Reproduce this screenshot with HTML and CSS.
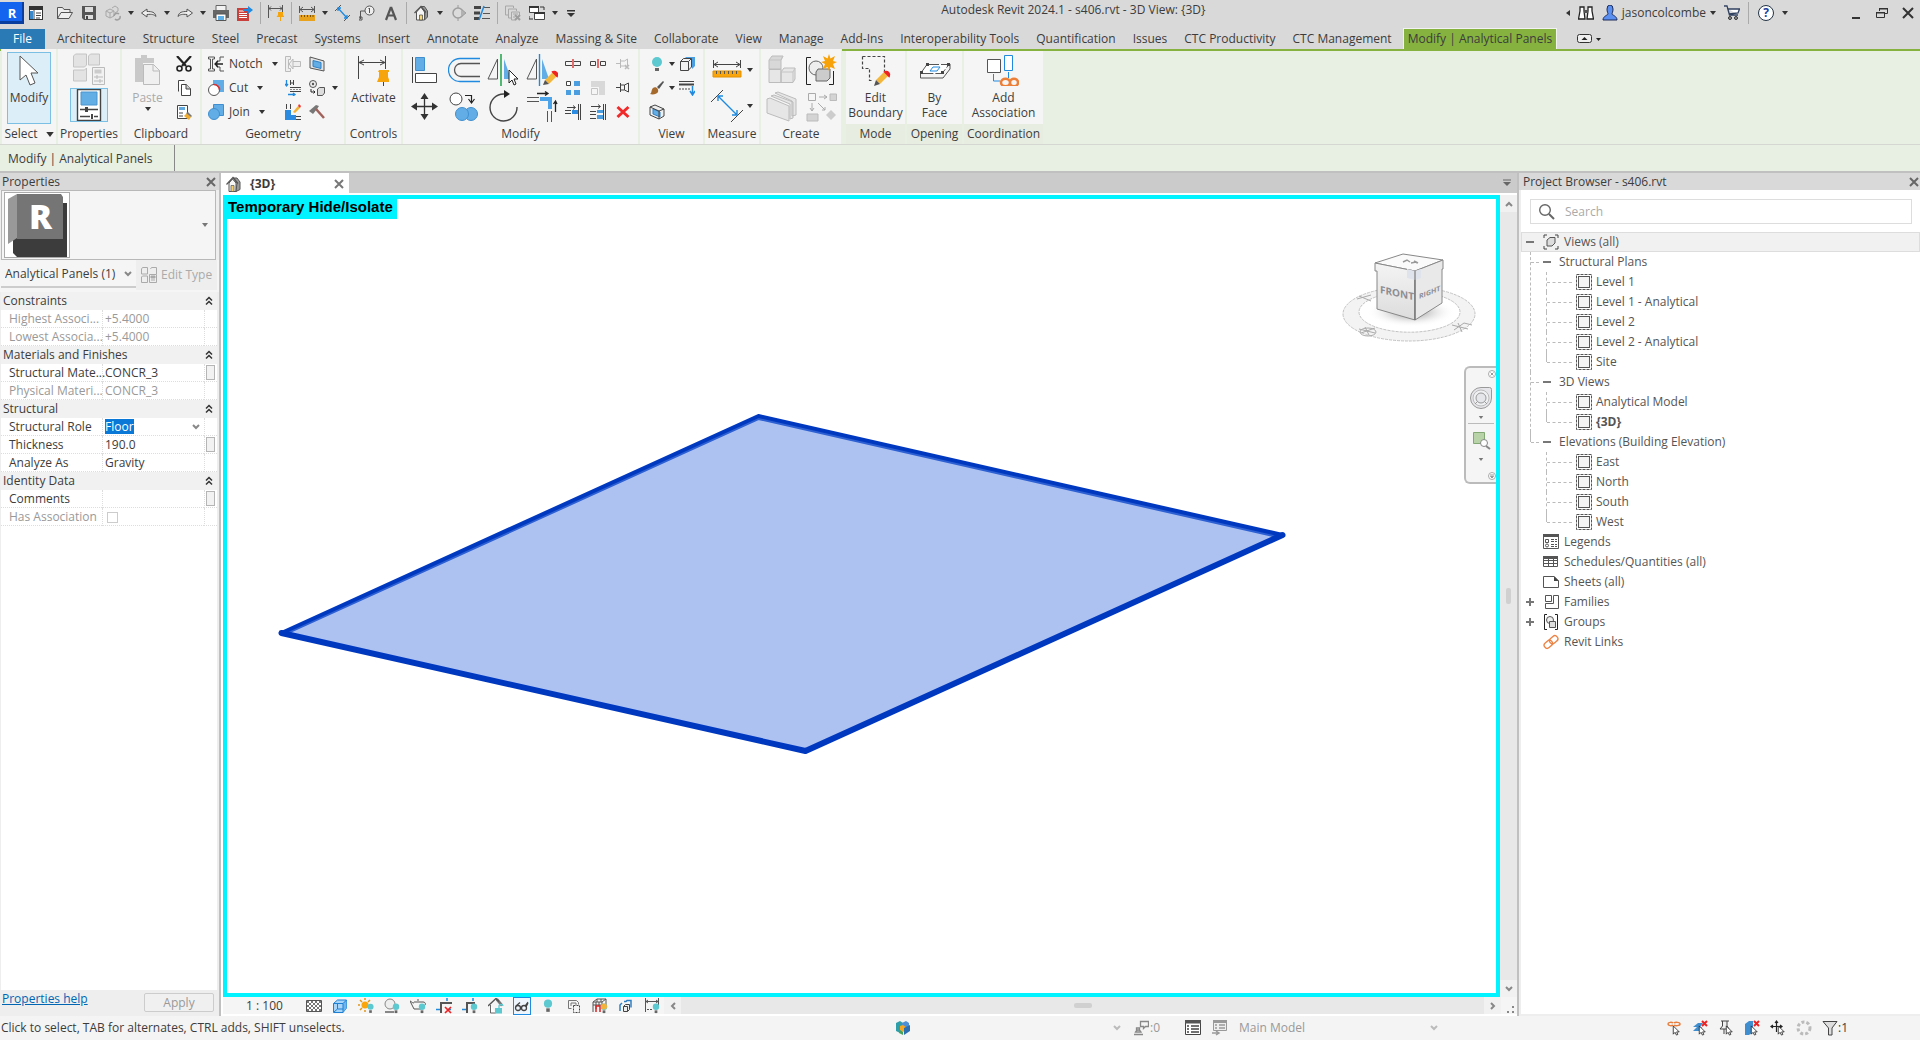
FILE: index.html
```html
<!DOCTYPE html>
<html lang="en">
<head>
<meta charset="utf-8">
<title>Autodesk Revit 2024.1 - s406.rvt - 3D View: {3D}</title>
<link rel="stylesheet" href="styles.css">
</head>
<body>
<svg class="defs" aria-hidden="true">
  <symbol id="view" viewBox="0 0 16 16"><rect x=".5" y=".5" width="15" height="15" fill="none" stroke="#555" stroke-dasharray="3 1"/><rect x="2.5" y="2.5" width="11" height="11" fill="#f3f3f3" stroke="#555"/></symbol>
  <symbol id="down" viewBox="0 0 6 4"><path d="M0 0h6L3 4z" fill="currentColor"/></symbol>
  <symbol id="chev" viewBox="0 0 8 6"><path d="M1 1l3 3 3-3" fill="none" stroke="currentColor" stroke-width="2"/></symbol>
  <symbol id="x" viewBox="0 0 10 10"><path d="M1 1l8 8M9 1L1 9" fill="none" stroke="currentColor" stroke-width="2"/></symbol>
  <symbol id="fold" viewBox="0 0 8 10"><path d="M1 4.500l3-3 3 3M1 8.500l3-3 3 3" fill="none" stroke="#333" stroke-width="1.500"/></symbol>
  <symbol id="bulb" viewBox="0 0 8 12"><circle cx="4" cy="4" r="3.500" fill="#5cc8cf"/><path d="M2.500 8h3v3h-3z" fill="#666"/></symbol>
  <symbol id="cursor" viewBox="0 0 8 12"><path d="M1 1v9l2-2 1.500 3 1.500-.7L4.700 7.500H7.500z" fill="#fff" stroke="#222" stroke-width=".9"/></symbol>
</svg>

<header class="titlebar">
  <nav class="qat" aria-label="Quick access">
    <button class="app" aria-label="Revit">R</button>
    <button class="q" aria-label="Home"><svg viewBox="0 0 16 16"><rect x="1.500" y="1.500" width="13" height="13" fill="#fff" stroke="#333"/><path d="M1 1h14v4H1z" fill="#333"/><path d="M6 5v10M8 8h5M8 10.500h5M8 13h4" stroke="#444" fill="none"/><path d="M2 6h3v8H2z" fill="#3a87c9"/></svg></button>
    <button class="q lead" aria-label="Open"><svg viewBox="0 0 16 16"><path d="M.5 13.500V2.500h5l1.500 2h6v3M.5 13.500l3.500-6h11.500l-3.500 6z" fill="#eee" stroke="#555"/></svg></button>
    <button class="q" aria-label="Save"><svg viewBox="0 0 16 16"><path d="M1 1h14v14H3l-2-2z" fill="#555"/><path d="M4 2h8v5H4zM4 10h8v4H4z" fill="#ddd"/><path d="M5 11h2v3H5z" fill="#444"/></svg></button>
    <button class="q dim" aria-label="Synchronize"><svg viewBox="0 0 16 16"><path d="M1 6l4-2 4 2v5l-4 2-4-2zM1 6l4 2 4-2M5 8v5M7 3l3-2 3 2v3l-3 2" fill="none" stroke="#888"/><path d="M9 11a3 3 0 015-2M15 11a3 3 0 01-5 3" fill="none" stroke="#777" stroke-width="1.500"/></svg></button>
    <svg class="dd"><use href="#down"/></svg>
    <button class="q" aria-label="Undo"><svg viewBox="0 0 16 16"><path d="M.5 8L6 4v2.500c5 0 8 .5 9 5-2-2-4-2.500-9-2V12z" fill="#eee" stroke="#555"/></svg></button>
    <svg class="dd"><use href="#down"/></svg>
    <button class="q" aria-label="Redo"><svg viewBox="0 0 16 16"><path d="M15.500 8L10 4v2.500c-5 0-8 .5-9 5 2-2 4-2.500 9-2V12z" fill="#eee" stroke="#555"/></svg></button>
    <svg class="dd"><use href="#down"/></svg>
    <button class="q" aria-label="Print"><svg viewBox="0 0 16 16"><path d="M3 .5h10v6H3z" fill="#f2f2f2" stroke="#666"/><path d="M0 5h16v8H0z" fill="#666"/><path d="M3 9h10v6.500H3z" fill="#fff" stroke="#555"/><path d="M5 11h6v4H5z" fill="#5fb0e8"/></svg></button>
    <button class="q" aria-label="Export PDF"><svg viewBox="0 0 16 16"><path d="M0 3h12v13H0z" fill="#c9403c"/><path d="M2 6h5M2 8.500h8M2 10.500h8M2 12.500h8" stroke="#fff"/><path d="M6 4h5V1l5 4-5 4V6H6z" fill="#1f8ae0"/></svg></button>
    <i class="sep"></i>
    <button class="q" aria-label="Controls"><svg viewBox="0 0 16 16"><path d="M.5 0v13M14.500 0v9M1 3.500h13M3 1.500l-2 2 2 2M12 1.500l2 2-2 2" fill="none" stroke="#555"/><path d="M10 7h5v3l1.500 2h-8L10 10zM12 12h1v4h-1z" fill="#f5a50b"/></svg></button>
    <i class="sep"></i>
    <button class="q" aria-label="Measure"><svg viewBox="0 0 16 16"><path d="M.5 1v7M15.500 1v7M1 4.500h14M4 2L1 4.500 4 7M12 2l3 2.500L12 7" fill="none" stroke="#555"/><path d="M0 10h16v6H0z" fill="#e9a21b"/><path d="M2.500 10v2M5.500 10v2M8.500 10v2M11.500 10v2M14 10v2" stroke="#7a5200"/></svg></button>
    <svg class="dd"><use href="#down"/></svg>
    <button class="q" aria-label="Aligned dimension"><svg viewBox="0 0 16 16"><path d="M0 6l6-6M9 16l6-6" stroke="#555"/><path d="M3 3l9 10M3 6V3h3M9 13h3v-3" fill="none" stroke="#1f8ae0" stroke-width="1.300"/></svg></button>
    <button class="q" aria-label="Tag"><svg viewBox="0 0 16 16"><circle cx="10.500" cy="5.500" r="4.500" fill="#eee" stroke="#555"/><path d="M10.500 3v5M9.500 4l1-1M6 6H1.500v8M0 12h3v3H0z" fill="none" stroke="#555"/></svg></button>
    <button class="q" aria-label="Text"><svg viewBox="0 0 16 16"><path d="M8 2L3 15M8 2l5 13M5 10.500h6" fill="none" stroke="#555" stroke-width="2.200"/></svg></button>
    <i class="sep"></i>
    <button class="q" aria-label="3D view"><svg viewBox="0 0 16 16"><path d="M2.500 7v8h8V7L7 2z" fill="#f6f6f6" stroke="#555"/><path d="M10.500 15l3-3V6l-3-4.500H7l4 5.500z" fill="#999" stroke="#555"/><path d="M.5 8l6.500-6.500 5 6" fill="none" stroke="#555" stroke-width="1.200"/><path d="M5.500 10h3v5h-3z" fill="#f8d978" stroke="#444" stroke-width=".7"/></svg></button>
    <svg class="dd"><use href="#down"/></svg>
    <button class="q dim" aria-label="Section"><svg viewBox="0 0 16 16"><circle cx="8" cy="8" r="5" fill="#ddd" stroke="#777" stroke-width="1.500"/><path d="M8 0v3M8 13v3M11 4l5 4-5 4" stroke="#777" fill="#999"/></svg></button>
    <button class="q" aria-label="Thin lines"><svg viewBox="0 0 16 16"><path d="M0 2.500h7M0 8h6M0 13.500h5" stroke="#444" stroke-width="3"/><path d="M10 2.500h6M9 8.500h7M8 13.500h8" stroke="#555"/><path d="M10 1L5 15" stroke="#1f8ae0" stroke-width="1.500"/></svg></button>
    <i class="sep"></i>
    <button class="q dim" aria-label="Close inactive views"><svg viewBox="0 0 16 16"><path d="M.5 1v9h3M.5 1h8v2M3.500 4v9h3M3.500 4h8v2M6.500 7v8h4M6.500 7h8v3M8 9h5M8 12h2" fill="none" stroke="#888"/><path d="M10 10l5 5M15 10l-5 5" stroke="#777" stroke-width="2"/></svg></button>
    <button class="q" aria-label="Switch windows"><svg viewBox="0 0 16 16"><path d="M.5 1.500h9v6h-9zM5.500 7.500h10v7h-10z" fill="#fff" stroke="#444"/><path d="M0 1h10v2H0zM5 7h11v2H5z" fill="#333"/><path d="M11 2h4v3M0 11v3h4" fill="none" stroke="#333"/></svg></button>
    <svg class="dd"><use href="#down"/></svg>
    <button class="q narrow" aria-label="Customize"><svg viewBox="0 0 16 16"><path d="M4 5h8v1.500H4zM4 8h8l-4 4z" fill="#333"/></svg></button>
  </nav>
  <h1 class="doc">Autodesk Revit 2024.1 - s406.rvt - 3D View: {3D}</h1>
  <div class="account">
    <svg class="w4" viewBox="0 0 4 6"><path d="M4 0v6L0 3z" fill="#333"/></svg>
    <button aria-label="Search"><svg viewBox="0 0 16 16"><path d="M2 2h4v4l1 8H.5L2 6zM10 2h4v4l1.500 8H9l1-8z" fill="#fff" stroke="#222" stroke-width="1.300"/><path d="M6 5h4v3H6z" fill="#555"/></svg></button>
    <button class="user"><svg viewBox="0 0 16 16"><path d="M5 4a3 4 0 016 0c0 3-1 4-1 5s5 2 5 6H1c0-4 5-5 5-6S5 7 5 4z" fill="#5b8ff0" stroke="#1c2b5a"/></svg>jasoncolcombe</button>
    <svg class="dd"><use href="#down"/></svg>
    <button aria-label="App store"><svg viewBox="0 0 16 16"><path d="M0 1h3l2.500 9H14M4 4h11.500L14 8l-9 1" fill="#fff" stroke="#30405f" stroke-width="1.300"/><circle cx="6" cy="13" r="1.500" fill="#999" stroke="#333"/><circle cx="12" cy="13" r="1.500" fill="#999" stroke="#333"/></svg></button>
    <i class="sep"></i>
    <button class="help" aria-label="Help">?</button>
    <svg class="dd"><use href="#down"/></svg>
  </div>
  <div class="win">
    <button aria-label="Minimize"><svg viewBox="0 0 12 12"><path d="M2 11h8" stroke="#333" stroke-width="2"/></svg></button>
    <button aria-label="Restore"><svg viewBox="0 0 12 12"><path d="M3.500 4V1.500h8v5H9M.5 5.500h8v5h-8z" fill="none" stroke="#333"/><path d="M3 1h9v1.500H3zM0 5h9v1.500H0z" fill="#333"/></svg></button>
    <button aria-label="Close"><svg viewBox="0 0 12 12"><path d="M1 1l10 10M11 1L1 11" stroke="#333" stroke-width="2"/></svg></button>
  </div>
</header>

<nav class="tabs" aria-label="Ribbon tabs">
  <button class="file">File</button><button>Architecture</button><button>Structure</button><button>Steel</button><button>Precast</button><button>Systems</button><button>Insert</button><button>Annotate</button><button>Analyze</button><button>Massing &amp; Site</button><button>Collaborate</button><button>View</button><button>Manage</button><button>Add-Ins</button><button>Interoperability Tools</button><button>Quantification</button><button>Issues</button><button>CTC Productivity</button><button>CTC Management</button><button class="active">Modify | Analytical Panels</button>
  <button class="toggle" aria-label="Minimize ribbon"><svg viewBox="0 0 24 10"><rect x=".5" y=".5" width="14" height="8" rx="2" fill="#eee" stroke="#333"/><path d="M4.500 6h6l-3-3z" fill="#222"/><path d="M19 4h5l-2.500 3z" fill="#222"/></svg></button>
</nav>

<section class="ribbon" aria-label="Modify ribbon">
  <div class="panel p-select">
    <div class="body"><button class="big on"><svg viewBox="0 0 32 32"><path d="M7 2v24l6-5 4 10 5-2-4-10h7z" fill="#fff" stroke="#555"/></svg><span>Modify</span></button></div>
    <h2>Select <svg class="dd"><use href="#down"/></svg></h2>
  </div>
  <div class="panel p-props">
    <div class="body col">
      <button class="mid" aria-label="Type properties"><svg viewBox="0 0 32 32"><path d="M.5 3l2-2h11v11l-2 2H.5zM15.500 3l2-2h9v11h-11zM.5 17h11l2-2v13H.5z" fill="#e3e3e3" stroke="#c4c4c4"/><path d="M19.500 14.500h12v17h-12z" fill="#f2f2f2" stroke="#bbb"/><path d="M21.500 16.500h7v4h-7z" fill="#ccc"/><path d="M21 24h9M21 28h9M24 22v4M27 26v4" stroke="#bbb"/></svg></button>
      <button class="mid on" aria-label="Properties"><svg viewBox="0 0 32 32"><path d="M4.500.5h23v31h-23z" fill="#fff" stroke="#444" stroke-width="1.400"/><path d="M8 3h16v13H8z" fill="#64aee6" stroke="#4a94cf"/><path d="M7 20.500h5M15 20.500h10M7 27.500h10M21 27.500h4" stroke="#444" stroke-width="1.300"/><path d="M12 18h3v5h-3zM18 25h2v5h-2z" fill="#444"/></svg></button>
    </div>
    <h2>Properties</h2>
  </div>
  <div class="panel p-clip">
    <div class="body">
      <button class="big off" disabled><svg viewBox="0 0 32 32"><path d="M3 4h6V1h6v3h7v5H11v19H3z" fill="#c9c9c9"/><path d="M11.500 10.500h10l6 6v14h-16z" fill="#f0f0f0" stroke="#bbb"/><path d="M21 10v7h7" fill="none" stroke="#bbb"/></svg><span>Paste</span><svg class="dd"><use href="#down"/></svg></button>
      <div class="trio">
        <button class="sm" aria-label="Cut"><svg viewBox="0 0 16 16"><path d="M1 0l9 10M15 0L6 10" stroke="#222" stroke-width="2.200"/><circle cx="3.500" cy="12.500" r="2.500" fill="none" stroke="#222" stroke-width="1.600"/><circle cx="12.500" cy="12.500" r="2.500" fill="none" stroke="#222" stroke-width="1.600"/></svg></button>
        <button class="sm" aria-label="Copy"><svg viewBox="0 0 16 16"><path d="M2.500 11.500V.5h6M5.500 4.500h5l4 4v7h-9z" fill="#fff" stroke="#444"/><path d="M10 4v5h5" fill="#ccc" stroke="#444"/></svg></button>
        <button class="sm" aria-label="Match type"><svg viewBox="0 0 16 16"><path d="M1.500 1.500h10v13h-10z" fill="#fff" stroke="#444"/><path d="M3 3h6v3H3z" fill="#5fa9e0"/><path d="M3 9h4M3 12h4" stroke="#444"/><path d="M8 12l3-3 4 4-2 3z" fill="#f0ab2e"/><path d="M10 9l2-1 4 4-1 1z" fill="#777"/></svg></button>
      </div>
    </div>
    <h2>Clipboard</h2>
  </div>
  <div class="panel p-geo">
    <div class="body">
      <div class="trio left">
        <button class="row"><svg viewBox="0 0 16 16"><path d="M.5 1h6v2h-2v10h2v2h-6v-2h2V3h-2zM16 1h-4v4H9v6h3v4h4" fill="none" stroke="#555"/><path d="M15 8H7M10 5L7 8l3 3" fill="none" stroke="#222" stroke-width="1.300"/></svg>Notch<svg class="dd"><use href="#down"/></svg></button>
        <button class="row"><svg viewBox="0 0 16 16"><path d="M5 0h11v12H9V5H5z" fill="#62ade6"/><circle cx="6" cy="10" r="5.500" fill="#fff" stroke="#555"/><path d="M6 4.500a5.500 5.500 0 015.500 5.500" fill="none" stroke="#d33" stroke-width="1.500"/></svg>Cut<svg class="dd"><use href="#down"/></svg></button>
        <button class="row"><svg viewBox="0 0 16 16"><path d="M5.500.5h10v11h-10z" fill="#62ade6" stroke="#3f8fd0"/><circle cx="6" cy="10" r="5.500" fill="#62ade6" stroke="#3f8fd0"/></svg>Join<svg class="dd"><use href="#down"/></svg></button>
      </div>
      <div class="trio">
        <button class="sm off" aria-label="Cope"><svg viewBox="0 0 16 16"><path d="M.5.5h5v3h-2v9h2v3h-5zM8 5.500h7.500v5H8M8 3v10L4 8z" fill="#eee" stroke="#bbb"/></svg></button>
        <button class="sm" aria-label="Beam joins"><svg viewBox="0 0 16 16"><path d="M1.500 0v5M0 4l1.500 2L3 4M3 14.500h6M8 13l2 1.500L8 16" stroke="#1f8ae0" fill="none" stroke-width="1.300"/><path d="M5.500 0v5M8.500 0v5M5 3h4M5 7.500h11M5 11.500h11" stroke="#444"/><path d="M5 9.500h11" stroke="#888" stroke-dasharray="2 1"/></svg></button>
        <button class="sm" aria-label="Demolish wall"><svg viewBox="0 0 16 16"><path d="M0 6h6v5h5v5H0z" fill="#2a8be0"/><path d="M1.500 0v5M5.500 0v5M11 12.500h5M11 15.500h5" stroke="#444"/><path d="M8 8l5-6 2 2-5 5z" fill="#f2b234"/><path d="M13 2l1-2 2 2-1 2z" fill="#e33"/></svg></button>
      </div>
      <div class="trio">
        <button class="sm" aria-label="Wall opening"><svg viewBox="0 0 16 16"><path d="M1 1l14 4v10L1 12z" fill="#e4e4e4" stroke="#555"/><path d="M4 4.500l8 2v6l-8-2z" fill="#62ade6" stroke="#2f7fc4"/></svg></button>
        <button class="sm" aria-label="Paint"><svg viewBox="0 0 16 16"><circle cx="4" cy="4" r="3.500" fill="#eee" stroke="#555"/><circle cx="4" cy="4" r="1.200" fill="#555"/><path d="M2 9v3h4M4.500 10.500L6 12l-1.500 1.500" stroke="#222" fill="none"/><path d="M8.500 9l2-1.500h5V13l-2 2.500h-5z" fill="#ddd" stroke="#555"/></svg></button>
        <button class="sm" aria-label="Demolish"><svg viewBox="0 0 16 16"><path d="M0 7l7-6 3 1-2 3-4 5z" fill="#777"/><path d="M7 5l8 9" stroke="#a0625a" stroke-width="2.500"/></svg></button>
      </div>
      <svg class="dd"><use href="#down"/></svg>
    </div>
    <h2>Geometry</h2>
  </div>
  <div class="panel p-ctl">
    <div class="body"><button class="big"><svg viewBox="0 0 32 32"><path d="M1.500 2v23M28.500 2v13M2 8.500h26M7 6L2 8.500 7 11M23 6l5 2.500-5 2.500" fill="none" stroke="#444"/><path d="M22 16h10v2h-1v5l2 5H20l2-5v-5h-1z" fill="#f7a50c"/><path d="M26.500 28v4" stroke="#444"/></svg><span>Activate</span></button></div>
    <h2>Controls</h2>
  </div>
  <div class="panel p-mod">
    <div class="body">
      <div class="grid4">
        <button class="lg" aria-label="Align"><svg viewBox="0 0 32 32"><path d="M3.500 3v26" stroke="#444"/><path d="M6.500 3.500h9v13h-9z" fill="#62ade6" stroke="#3f8fd0"/><path d="M6.500 19.500h21v9h-21z" fill="#fff" stroke="#444"/></svg></button>
        <button class="lg" aria-label="Offset"><svg viewBox="0 0 32 32"><path d="M32 4.500H12a11 11 0 000 23h20" fill="none" stroke="#1f8ae0" stroke-width="1.300"/><path d="M32 9.500H13a6 6 0 000 13h19" fill="none" stroke="#555" stroke-width="1.300"/></svg></button>
        <button class="lg" aria-label="Mirror pick axis"><svg viewBox="0 0 32 32"><path d="M10.500 5v20H1z" fill="none" stroke="#555"/><path d="M14 0v32" stroke="#0a9f3c" stroke-width="1.400"/><path d="M17 5v20h7z" fill="#62ade6"/><path d="M22 16v13l3-3 2 5 2-1-2-5h4z" fill="#fff" stroke="#222"/></svg></button>
        <button class="lg" aria-label="Mirror draw axis"><svg viewBox="0 0 32 32"><path d="M10.500 5v20H1z" fill="none" stroke="#555"/><path d="M13.500 0v32" stroke="#1f8ae0" stroke-width="1.400"/><path d="M16 5v20h7z" fill="#62ade6"/><path d="M19 26l8-8 4 4-8 8z" fill="#f4b73e"/><path d="M27 18a3 3 0 014 4z" fill="#e22" stroke="#e22" stroke-width="2"/><path d="M17 31l2-5 4 4z" fill="#555"/></svg></button>
        <button class="lg" aria-label="Move"><svg viewBox="0 0 32 32"><path d="M15.500 5v22M5 16.500h22" stroke="#333" stroke-width="1.300"/><path d="M15.500 3l4 6h-8zM15.500 30l4-6h-8zM2 16.500l6-4v8zM29 16.500l-6-4v8z" fill="#333"/></svg></button>
        <button class="lg" aria-label="Copy elements"><svg viewBox="0 0 32 32"><circle cx="8" cy="9" r="6" fill="#fff" stroke="#444"/><path d="M17 5.500h6.500V12M20.500 9l3 4 3-4" fill="none" stroke="#222" stroke-width="1.200"/><circle cx="23" cy="24" r="6.500" fill="#62ade6" stroke="#3f8fd0"/><circle cx="14" cy="24" r="6.500" fill="#62ade6" stroke="#3f8fd0"/></svg></button>
        <button class="lg" aria-label="Rotate"><svg viewBox="0 0 32 32"><path d="M17 4a13.500 13.500 0 1013 13" fill="none" stroke="#444" stroke-width="1.400"/><path d="M17 0v8l6-4z" fill="#222"/></svg></button>
        <button class="lg" aria-label="Trim corner"><svg viewBox="0 0 32 32"><path d="M1 7.500h12M1 11.500h12M21.500 21v11M25.500 21v11" stroke="#555"/><path d="M14 7h12v12h-4v-8h-8z" fill="#4ba3ea"/><path d="M11 3.500h11M19 1.500l3 2-3 2M29.500 22V11M27.500 14l2-3 1.500 3" fill="none" stroke="#222" stroke-width="1.300"/></svg></button>
      </div>
      <div class="grid3">
        <button class="sm" aria-label="Split"><svg viewBox="0 0 16 16"><path d="M7 5.500H.5v4H7M9 5.500h6.500v4H9" fill="none" stroke="#444"/><path d="M8 3v9" stroke="#d22" stroke-width="1.300"/></svg></button>
        <button class="sm" aria-label="Split with gap"><svg viewBox="0 0 16 16"><path d="M.5 5.500h5v4h-5zM10.500 5.500h5v4h-5z" fill="none" stroke="#444"/><path d="M8 3v9" stroke="#d22" stroke-width="1.300"/></svg></button>
        <button class="sm off" aria-label="Unpin"><svg viewBox="0 0 16 16"><path d="M1 7.500h4M5.500 3v9M5.500 5h4l3-2v9l-3-2h-4" fill="none" stroke="#bbb"/><path d="M10 9l4 4M14 9l-4 4" stroke="#bbb" stroke-width="1.500"/></svg></button>
        <button class="sm" aria-label="Array"><svg viewBox="0 0 16 16"><path d="M1.500 1.500h4v4h-4z" fill="#fff" stroke="#444"/><path d="M9 1h6v5H9zM1 10h5v5H1zM9 10h6v5H9z" fill="#4b9fe0"/></svg></button>
        <button class="sm off" aria-label="Scale"><svg viewBox="0 0 16 16"><path d="M1 1h14v14H9V7H1z" fill="#d8d8d8"/><path d="M1.500 8.500h6v6h-6z" fill="#f5f5f5" stroke="#c4c4c4"/></svg></button>
        <button class="sm" aria-label="Pin"><svg viewBox="0 0 16 16"><path d="M1 7.500h4M5.500 3v9M5.500 5h4l4-2v9l-4-2h-4M9.500 5v5" fill="none" stroke="#444"/></svg></button>
        <button class="sm" aria-label="Trim single"><svg viewBox="0 0 16 16"><path d="M2 3.500h8M8 1.500l2.500 2L8 5.500M13.500 0v16M15.500 0v16M0 6.500h6M0 9.500h6" fill="none" stroke="#444"/><path d="M7 6h6v4H7z" fill="#2a8be0"/></svg></button>
        <button class="sm" aria-label="Trim multiple"><svg viewBox="0 0 16 16"><path d="M1 2.500h9M8 .5l2.500 2L8 4.500M13.500 0v16M15.500 0v16M0 7.500h6M0 10.500h6M0 14.500h6" fill="none" stroke="#444"/><path d="M7 6h6v3H7zM7 11h6v4H7z" fill="#4b9fe0"/></svg></button>
        <button class="sm" aria-label="Delete"><svg viewBox="0 0 16 16"><path d="M2.500 3l11 10M13.500 3l-11 10" stroke="#f02a2a" stroke-width="3"/></svg></button>
      </div>
    </div>
    <h2>Modify</h2>
  </div>
  <div class="panel p-view">
    <div class="body">
      <div class="trio">
        <button class="sm" aria-label="Hide"><svg viewBox="0 0 16 16"><circle cx="8" cy="6" r="5" fill="#5cc8cf"/><path d="M6 12h4v3H6z" fill="#666"/></svg></button>
        <button class="sm" aria-label="Override"><svg viewBox="0 0 16 16"><path d="M8 7l6-6 1 1-5 7z" fill="#555"/><path d="M1 14c2-1 1-4 3-6 3-2 6 1 5 4-1 2-5 3-8 2z" fill="#a4692b"/></svg></button>
        <button class="sm" aria-label="Selection box"><svg viewBox="0 0 16 16"><path d="M1 3l5-2 9 4v7l-5 3-9-4z" fill="#eee" stroke="#444"/><path d="M4 5l7 3v5l-7-3z" fill="#62ade6" stroke="#2f7fc4"/><path d="M1 3l9 4v8M10 7l5-2" fill="none" stroke="#444"/></svg></button>
      </div>
      <div class="trio dds"><svg class="dd"><use href="#down"/></svg><svg class="dd"><use href="#down"/></svg><span></span></div>
      <div class="trio">
        <button class="sm" aria-label="Displace"><svg viewBox="0 0 16 16"><path d="M4 4l3-3h9v9l-3 3V4z" fill="#4b9fe0"/><path d="M1.500 5.500h8v9h-8zM1.500 5.500l3-3h8l-3 3M12.500 3v8l-3 3" fill="#f2f2f2" stroke="#444"/></svg></button>
        <button class="sm" aria-label="Linework"><svg viewBox="0 0 16 16"><path d="M0 1.500h15" stroke="#444"/><path d="M0 4.500h15" stroke="#444" stroke-width="2"/><path d="M0 9h11" stroke="#444" stroke-dasharray="2 1"/><path d="M13.500 6v8M11 11l2.500 4 2.500-4" stroke="#1f8ae0" stroke-width="1.500" fill="none"/></svg></button>
        <span></span>
      </div>
    </div>
    <h2>View</h2>
  </div>
  <div class="panel p-meas">
    <div class="body">
      <div class="grid2">
        <button class="lg" aria-label="Measure"><svg viewBox="0 0 32 32"><path d="M2.500 6v8M29.500 6v8M3 10.500h26M7 8l-4 2.500L7 13M25 8l4 2.500-4 2.500" fill="none" stroke="#444"/><path d="M2 17h28v6H2z" fill="#fba50c" stroke="#e09000"/><path d="M5.500 17v3M9.500 17v3M13.500 17v3M17.500 17v3M21.500 17v3M25.500 17v3" stroke="#555"/></svg></button><svg class="dd"><use href="#down"/></svg>
        <button class="lg" aria-label="Dimension"><svg viewBox="0 0 32 32"><path d="M0 12L12 0M20 32l12-12" stroke="#444"/><path d="M7 6l19 19M7 11V6h5M21 25h5v-5" fill="none" stroke="#1f8ae0" stroke-width="1.400"/></svg></button><svg class="dd"><use href="#down"/></svg>
      </div>
    </div>
    <h2>Measure</h2>
  </div>
  <div class="panel p-create">
    <div class="body">
      <div class="grid22">
        <button class="lg off" aria-label="Create assembly"><svg viewBox="0 0 32 32"><path d="M3 6l3-4h11l-2 4v9H3z" fill="#d8d8d8" stroke="#bcbcbc"/><path d="M3 15.500h12v13H3zM15 18l3-4h11v11l-2 3.500H15z" fill="#e6e6e6" stroke="#bcbcbc"/><path d="M3 6h12l2-4M15 15v13M15 18h12l2-4M27 18v10" fill="none" stroke="#c4c4c4"/></svg></button>
        <button class="lg" aria-label="Create group"><svg viewBox="0 0 32 32"><path d="M6 3.500H1.500v27H6M24 30.500h4.500V17" fill="none" stroke="#222"/><circle cx="11" cy="14" r="7" fill="#eee" stroke="#666"/><path d="M11 18l2-3h12v9l-3 3H11z" fill="#ccc" stroke="#666"/><path d="M24 0l1.500 4.500L30 2l-2 5 4 1-4 2 2 5-4.500-2L24 17l-1.500-4L18 15l2-5-4-2 4-1-2-5 4.500 2.500z" fill="#f7a208"/></svg></button>
        <button class="lg off" aria-label="Create parts"><svg viewBox="0 0 32 32"><path d="M9 3l3-1 18 7v16l-4 1V11zM5 6l3-1 19 7v16l-3 1V14zM1 9l3-1 19 8v15L1 23z" fill="#e6e6e6" stroke="#bcbcbc"/></svg></button>
        <button class="lg off" aria-label="Create similar"><svg viewBox="0 0 32 32"><path d="M3.500 3.500h7v7h-7z" fill="#f5f5f5" stroke="#aaa"/><path d="M25 4h6.500v6.500H25zM2 24h11v7H2z" fill="#d4d4d4" stroke="#bbb"/><path d="M26 20l5 5-5 5-5-5z" fill="#ccc"/><path d="M14 7h8M19 5l3 2-3 2M7 13v8M5 18l2 3 2-3M13 13l7 7M17 20h3v-3" fill="none" stroke="#aaa"/></svg></button>
      </div>
    </div>
    <h2>Create</h2>
  </div>
  <div class="panel ctx p-mode">
    <div class="body"><button class="big"><svg viewBox="0 0 32 32"><path d="M2.500 2.500h22v15M2.500 2.500v12h7v12h4" fill="none" stroke="#444" stroke-dasharray="3 2" stroke-width="1.200"/><path d="M16 26l8-8 4 4-8 8z" fill="#f4b73e"/><path d="M25 18a3 3 0 014 4z" fill="#e22" stroke="#e22" stroke-width="2"/><path d="M14 32l2-6 4 4z" fill="#555"/></svg><span>Edit<br>Boundary</span></button></div>
    <h2>Mode</h2>
  </div>
  <div class="panel ctx p-open">
    <div class="body"><button class="big"><svg viewBox="0 0 32 32"><path d="M8 10.500h22l-7 9H1.500z" fill="#fff" stroke="#555" stroke-dasharray="12 2"/><path d="M1.500 19v5H24l7-9v-5" fill="none" stroke="#555"/><path d="M14 13h7l-3 4h-7z" fill="#fff" stroke="#1f8ae0"/><path d="M7 9h3v3H7zM28 9h3v3h-3zM1 17h3v3H1zM22 17h3v3h-3z" fill="#444"/></svg><span>By<br>Face</span></button></div>
    <h2>Opening</h2>
  </div>
  <div class="panel ctx p-coord">
    <div class="body"><button class="big"><svg viewBox="0 0 32 32"><path d="M.5 5.500h13v13H.5z" fill="#fff" stroke="#555"/><path d="M17.500 1.500h8v15h-8z" fill="#fff" stroke="#1f8ae0"/><path d="M6.500 20v7H13M21.500 18v6" fill="none" stroke="#1f8ae0"/><path d="M14 28.500c0-5 9-5 9 0s8 5 8 0-8-5-8 0-9 5-9 0z" fill="none" stroke="#ec7f38" stroke-width="2.500"/></svg><span>Add<br>Association</span></button></div>
    <h2>Coordination</h2>
  </div>
</section>

<div class="options"><span>Modify | Analytical Panels</span></div>

<main class="work">
  <aside class="props">
    <header class="dockhead"><span>Properties</span><button aria-label="Close Properties"><svg viewBox="0 0 10 10"><use href="#x"/></svg></button></header>
    <button class="typesel" aria-label="Type selector">
      <svg class="thumb" viewBox="0 0 64 64"><path d="M8 10h54v54H12l-4-4z" fill="#3c3c3c"/><path d="M12 1L3 6v45l9-6z" fill="#999"/><path d="M12 1h44l2 3v42H12z" fill="#757575"/><text x="24" y="36" class="logo">R</text></svg>
      <svg class="dd"><use href="#down"/></svg>
    </button>
    <div class="filter">
      <label class="pick"><select aria-label="Category filter"><option>Analytical Panels (1)</option></select><svg class="cv"><use href="#chev"/></svg></label>
      <button class="edit" disabled><svg viewBox="0 0 16 16"><path d="M.5 2l1-1.500h5V7h-6zM9.500 2l1-1.500h5V7M.5 10l1-1h5v6.500h-6z" fill="none" stroke="#aaa"/><path d="M8.500 7.500h7v8h-7z" fill="#eee" stroke="#aaa"/><path d="M10 9h4v2h-4zM10 13h4" fill="#aaa" stroke="#aaa"/></svg>Edit Type</button>
    </div>
    <div class="scroll">
      <table class="ptable">
        <colgroup><col class="c1"><col><col class="c3"></colgroup>
        <tr class="g"><th colspan="2">Constraints</th><td><svg><use href="#fold"/></svg></td></tr>
        <tr class="off"><th>Highest Associ...</th><td>+5.4000</td><td></td></tr>
        <tr class="off"><th>Lowest Associa...</th><td>+5.4000</td><td></td></tr>
        <tr class="g"><th colspan="2">Materials and Finishes</th><td><svg><use href="#fold"/></svg></td></tr>
        <tr><th>Structural Mate...</th><td>CONCR_3</td><td><button aria-label="Associate material"></button></td></tr>
        <tr class="off"><th>Physical Materi...</th><td>CONCR_3</td><td></td></tr>
        <tr class="g"><th colspan="2">Structural</th><td><svg><use href="#fold"/></svg></td></tr>
        <tr><th>Structural Role</th><td><label class="pick role"><select aria-label="Structural Role"><option>Floor</option></select><svg class="cv"><use href="#chev"/></svg></label></td><td></td></tr>
        <tr><th>Thickness</th><td>190.0</td><td><button aria-label="Associate thickness"></button></td></tr>
        <tr><th>Analyze As</th><td>Gravity</td><td></td></tr>
        <tr class="g"><th colspan="2">Identity Data</th><td><svg><use href="#fold"/></svg></td></tr>
        <tr><th>Comments</th><td></td><td><button aria-label="Associate comments"></button></td></tr>
        <tr class="off"><th>Has Association</th><td><input type="checkbox" aria-label="Has Association" disabled></td><td></td></tr>
      </table>
    </div>
    <footer><a href="#help">Properties help</a><button disabled>Apply</button></footer>
  </aside>

  <section class="viewer">
    <div class="vtabs">
      <div class="vtab"><svg viewBox="0 0 16 16"><path d="M3 7v8.500h7V7L6.500 3z" fill="#f6f6f6" stroke="#555"/><path d="M10 15.500l4-2V6l-3-4H7l4 5z" fill="#999" stroke="#555"/><path d="M.5 8.500L7 1.500l5 6" fill="none" stroke="#555" stroke-width="1.200"/><path d="M5 9.500h3v6H5z" fill="#f4cf6a" stroke="#555" stroke-width=".7"/></svg><strong>{3D}</strong><button aria-label="Close view"><svg viewBox="0 0 10 10"><use href="#x"/></svg></button></div>
      <button class="vmenu" aria-label="View list"><svg viewBox="0 0 8 8"><path d="M0 .5h8v1H0zM0 3h8L4 7z" fill="#666"/></svg></button>
    </div>
    <div class="vrow">
      <div class="canvas">
        <svg class="scene" viewBox="0 0 1268 794" preserveAspectRatio="xMidYMid meet" role="img" aria-label="Analytical panel">
          <path d="M54 434L531 217 1055 336 578 552z" fill="#aec2f2"/>
          <path d="M58 434L531 219 1050 337" fill="none" stroke="#2d60d2" stroke-width="4"/>
          <path d="M54 434L531 217 1055 336" fill="none" stroke="#0039bf" stroke-width="4" stroke-linejoin="round"/>
          <path d="M54 434L578 552 1055 336" fill="none" stroke="#0039bf" stroke-width="6" stroke-linejoin="round" stroke-linecap="round"/>
        </svg>
        <span class="isolate">Temporary Hide/Isolate</span>
        <svg class="cube" viewBox="0 0 136 92">
          <defs><radialGradient id="sh"><stop offset="0" stop-color="#555" stop-opacity=".75"/><stop offset="1" stop-color="#fff" stop-opacity="0"/></radialGradient><linearGradient id="fr" x2="0" y2="1"><stop offset="0" stop-color="#f4f4f5"/><stop offset="1" stop-color="#dcdcdc"/></linearGradient></defs>
          <path fill-rule="evenodd" d="M2 61a66 27 0 10132 0a66 27 0 10-132 0zM18 59a50 20 0 10101 0a50 20 0 10-101 0z" fill="#f3f3f3" stroke="#c2c2c2" stroke-dasharray="3 1"/>
          <ellipse cx="70" cy="59" rx="44" ry="15" fill="url(#sh)"/>
          <path d="M34 10L62 1l40 6-28 11z" fill="#fafafa" stroke="#888"/>
          <path d="M34 10l40 8v49l-38-11V18h-2z" fill="url(#fr)" stroke="#888"/>
          <path d="M74 18l28-11v9h-1v34L74 67z" fill="#e9e9ea" stroke="#888"/>
          <path d="M66 16l8 2 6-2v9l-6 2-8-2z" fill="#dfe3ec"/><path d="M74 18v49" stroke="#666"/>
          <path d="M62 9l4-2 3 2M70 10l5-1 1 1M73 8l4 2" fill="none" stroke="#999" stroke-width="1.500"/>
          <text transform="translate(39 40) skewY(12)" class="face front">FRONT</text>
          <text transform="translate(78 46) skewY(-22)" class="face side">RIGHT</text>
          <path d="M16 46l14-4M18 43l12 5M20 80l14-5M18 76l16 4M24 74l4 8M111 72l16 4M113 77l10-7 8 2M117 70l4 9" stroke="#aaa" fill="none"/>
          <ellipse cx="27" cy="79" rx="8" ry="4" fill="none" stroke="#aaa"/>
        </svg>
        <div class="navbar">
          <button class="nx" aria-label="Close navigation bar"><svg viewBox="0 0 8 8"><circle cx="4" cy="4" r="3.500" fill="#fff" stroke="#aaa"/><path d="M2.500 2.500l3 3M5.500 2.500l-3 3" stroke="#999"/></svg></button>
          <button aria-label="Steering wheel"><svg class="nb" viewBox="0 0 24 24"><path d="M12 1.500h8.500a2 2 0 012 2V12A10.500 10.500 0 1112 1.500z" fill="#e6e6ea" stroke="#999"/><circle cx="12" cy="12" r="8" fill="#eef0f2" stroke="#bbb"/><path d="M6 18l3-3M18 18l-3-3" stroke="#999"/><circle cx="12" cy="12" r="5" fill="#e4e6ea" stroke="#999"/></svg></button>
          <svg class="dd"><use href="#down"/></svg>
          <hr>
          <button aria-label="Zoom region"><svg class="nb" viewBox="0 0 24 24"><path d="M4.500 4.500h11v11h-11z" fill="#b9d3a8" stroke="#83a873"/><circle cx="15" cy="15" r="3.500" fill="#fff" stroke="#888"/><path d="M17 18l4 3" stroke="#888" stroke-width="2"/></svg></button>
          <svg class="dd"><use href="#down"/></svg>
          <button class="nx end" aria-label="Customize"><svg viewBox="0 0 8 8"><circle cx="4" cy="4" r="3.500" fill="#fff" stroke="#aaa"/><path d="M2 3h4M2.500 4.500h3L4 6z" stroke="#999" fill="#999"/></svg></button>
        </div>
      </div>
      <div class="vs"><button aria-label="Scroll up"><svg class="cv flip"><use href="#chev"/></svg></button><i></i><button aria-label="Scroll down"><svg class="cv"><use href="#chev"/></svg></button></div>
    </div>
    <div class="vbar">
      <button class="scale">1 : 100</button>
      <div class="vicons">
        <button aria-label="Detail level"><svg viewBox="0 0 16 16"><path d="M.5 2.500h15v11H.5z" fill="#fff" stroke="#555"/><path d="M1 4h14M1 8h14M1 12h14" stroke="#777" stroke-width="2" stroke-dasharray="2 2"/><path d="M3 6h12M3 10h12" stroke="#777" stroke-width="2" stroke-dasharray="2 2"/></svg></button>
        <button aria-label="Visual style"><svg viewBox="0 0 16 16"><path d="M1.500 5.500l4-3.500h9v8l-3.500 4.500h-9.500z" fill="#a7d5fa" stroke="#1f7fd0"/><path d="M11 5.500L14.500 2v8L11 14.500z" fill="#6cb6f0"/><path d="M1.500 5.500H11v9M11 5.500L14.500 2M5.500 6v5M2 14l3.500-3H11" fill="none" stroke="#1f7fd0"/></svg></button>
        <button aria-label="Sun path"><svg viewBox="0 0 16 16"><circle cx="7" cy="7" r="3.500" fill="#f9a50b"/><path d="M7 0v2M7 12v2M0 7h2M12 7h2M2 2l2 2M12 2l-2 2M2 12l2-2" stroke="#e0941a" stroke-width="1.500"/><use href="#bulb" x="9" y="5" width="7" height="11"/></svg></button>
        <button aria-label="Shadows"><svg viewBox="0 0 16 16"><circle cx="6" cy="6" r="5" fill="#eee" stroke="#888"/><path d="M1 14h9" stroke="#888" stroke-width="2"/><use href="#bulb" x="8" y="5" width="8" height="11"/></svg></button>
        <button aria-label="Rendering"><svg viewBox="0 0 16 16"><path d="M4 5c-2 0-3-2-4-2l4 8h7M4 4h9c3 0 3 3 1 4M8 1v2" fill="none" stroke="#555"/><use href="#bulb" x="8" y="5" width="8" height="11"/></svg></button>
        <button aria-label="Crop view"><svg viewBox="0 0 16 16"><path d="M5 15V5h11" fill="none" stroke="#555" stroke-width="2"/><path d="M11 0v3M0 11.500h4M12 11.500h3" stroke="#1f8ae0" stroke-width="1.500"/><path d="M9 9l6 6M15 9l-6 6" stroke="#e22" stroke-width="1.700"/></svg></button>
        <button aria-label="Show crop"><svg viewBox="0 0 16 16"><path d="M5 15V5h8" fill="none" stroke="#555" stroke-width="2"/><path d="M11 0v3M0 11.500h4" stroke="#1f8ae0" stroke-width="1.500"/><use href="#bulb" x="8" y="5" width="8" height="11"/></svg></button>
        <button aria-label="Lock 3D view"><svg viewBox="0 0 16 16"><path d="M2.500 7v8h5" fill="#fff" stroke="#666"/><path d="M8 .5h2l5 6-2 2-5-6z" fill="#777"/><path d="M0 8l8-7.500 3 3" fill="none" stroke="#555" stroke-width="1.400"/><path d="M7 10h7v5.500H7z" fill="#5cc8cf"/><path d="M11 10V8c0-2 4-2 4 0" fill="none" stroke="#5cc8cf" stroke-width="1.300"/></svg></button>
        <button class="sel" aria-label="Temporary hide/isolate"><svg viewBox="0 0 16 16"><circle cx="4" cy="10" r="2.500" fill="none" stroke="#444" stroke-width="1.300"/><circle cx="10" cy="10" r="2.500" fill="none" stroke="#444" stroke-width="1.300"/><path d="M2 8l4-3.500M11 8l3-4M6.500 10h1M12 9l2-4" fill="none" stroke="#444" stroke-width="1.200"/></svg></button>
        <button aria-label="Reveal hidden"><svg viewBox="0 0 16 16"><use href="#bulb" x="3" y="1" width="10" height="14"/></svg></button>
        <button aria-label="View properties"><svg viewBox="0 0 16 16"><path d="M2.500 10.500v-8h8l2 2v2M2.500 10.500h3M5 5h5v2M5 5v3" fill="none" stroke="#777"/><path d="M7.500 7.500h6v7h-6z" fill="#f5f5f5" stroke="#444" stroke-dasharray="2 1"/></svg></button>
        <button aria-label="Analytical model"><svg viewBox="0 0 16 16"><path d="M1 4l4-3h9v8M1 4h9v4M1 4v10M1 7h9M4 4v7M7 4v4M10 4l4-3M5 1v3M9 1v3" fill="none" stroke="#555"/><path d="M4 14V8h4v6" fill="none" stroke="#d22" stroke-width="1.500"/><use href="#bulb" x="8" y="5" width="8" height="11"/><circle cx="12" cy="8.500" r="3" fill="#f3b23a"/></svg></button>
        <button aria-label="Displacement sets"><svg viewBox="0 0 16 16"><path d="M6 3.500h2l1-1h4v7M4 5l-2 2v6" fill="none" stroke="#2f7fc4" stroke-width="1.500"/><path d="M5.500 8.500h4v5h-4zM5.500 8.500l2-2h4v5l-2 2" fill="#eee" stroke="#444"/></svg></button>
        <button aria-label="Constraints"><svg viewBox="0 0 16 16"><path d="M1.500 0v14M14.500 0v7M2 3.500h12M4 2L2 3.500 4 5M12 2l2 1.500L12 5" fill="none" stroke="#555"/><path d="M3 11.500h6" stroke="#555" stroke-dasharray="2 1"/><use href="#bulb" x="8" y="5" width="8" height="11"/></svg></button>
      </div>
      <div class="hs"><button aria-label="Scroll left"><svg class="cv ltr"><use href="#chev"/></svg></button><i></i><button aria-label="Scroll right"><svg class="cv rtl"><use href="#chev"/></svg></button></div>
      <svg class="grip" viewBox="0 0 8 8"><path d="M6 0h2v2H6zM6 5h2v2H6zM1 5h2v2H1z" fill="#888"/></svg>
    </div>
  </section>

  <aside class="browser">
    <header class="dockhead"><span>Project Browser - s406.rvt</span><button aria-label="Close Project Browser"><svg viewBox="0 0 10 10"><use href="#x"/></svg></button></header>
    <label class="search"><svg viewBox="0 0 16 16"><circle cx="6" cy="6" r="5.300" fill="none" stroke="#666" stroke-width="1.400"/><path d="M10 10l5 5" stroke="#666" stroke-width="2"/></svg><input type="search" placeholder="Search" aria-label="Search"></label>
    <ul class="tree">
      <li class="root"><i class="tg"></i><svg viewBox="0 0 16 16"><path d="M4 1H1v3M12 1h3v3M4 15H1v-3M12 15h3v-3" fill="none" stroke="#444"/><path d="M4 6l3-2.500h5V9l-3 3H4z" fill="#ddd" stroke="#555"/></svg><span>Views (all)</span></li>
      <li class="views">
        <ul class="l2">
          <li><div class="n"><i class="tg"></i><span>Structural Plans</span></div>
            <ul class="l3"><li><svg><use href="#view"/></svg><span>Level 1</span></li><li><svg><use href="#view"/></svg><span>Level 1 - Analytical</span></li><li><svg><use href="#view"/></svg><span>Level 2</span></li><li><svg><use href="#view"/></svg><span>Level 2 - Analytical</span></li><li><svg><use href="#view"/></svg><span>Site</span></li></ul></li>
          <li><div class="n"><i class="tg"></i><span>3D Views</span></div>
            <ul class="l3"><li><svg><use href="#view"/></svg><span>Analytical Model</span></li><li><svg><use href="#view"/></svg><strong>{3D}</strong></li></ul></li>
          <li><div class="n"><i class="tg"></i><span>Elevations (Building Elevation)</span></div>
            <ul class="l3"><li><svg><use href="#view"/></svg><span>East</span></li><li><svg><use href="#view"/></svg><span>North</span></li><li><svg><use href="#view"/></svg><span>South</span></li><li><svg><use href="#view"/></svg><span>West</span></li></ul></li>
        </ul>
      </li>
      <li class="top"><i class="tg none"></i><svg viewBox="0 0 16 16"><path d="M.5 1.500h15v13H.5z" fill="#fff" stroke="#555"/><path d="M0 0h16v3H0z" fill="#555"/><path d="M2.500 5.500h3v3h-3z" fill="none" stroke="#555"/><circle cx="4" cy="11.500" r="1.500" fill="none" stroke="#555"/><path d="M8 5.500h6M8 7.500h6M8 10.500h6M8 12.500h6" stroke="#555" stroke-dasharray="3 1"/></svg><span>Legends</span></li>
      <li class="top"><i class="tg none"></i><svg viewBox="0 0 16 16"><path d="M.5 2.500h14v10H.5zM5.500 4v9M10.500 4v9M0 6.500h15M0 9.500h15" fill="none" stroke="#555"/><path d="M0 2h15v3H0z" fill="#555"/></svg><span>Schedules/Quantities (all)</span></li>
      <li class="top"><i class="tg none"></i><svg viewBox="0 0 16 16"><path d="M.5 2.500H11L15.500 7v6.500H.5z" fill="#fff" stroke="#555"/><path d="M11 2v5h5z" fill="#444"/></svg><span>Sheets (all)</span></li>
      <li class="top"><i class="tg plus"></i><svg viewBox="0 0 16 16"><path d="M2.500 1.500h6v6h-6zM10.500 1.500h5v13h-13v-5h8z" fill="#fff" stroke="#555"/></svg><span>Families</span></li>
      <li class="top"><i class="tg plus"></i><svg viewBox="0 0 16 16"><path d="M4 .5H1.500v15H4M12 .5h2.500v15H12" fill="none" stroke="#222"/><circle cx="7" cy="6" r="3.500" fill="#eee" stroke="#555"/><path d="M6.500 7.500h6v6h-6z" fill="#ddd" stroke="#555"/></svg><span>Groups</span></li>
      <li class="top"><i class="tg none"></i><svg viewBox="0 0 16 16"><g transform="rotate(-40 8 8)" fill="none" stroke="#ec8344" stroke-width="1.400"><rect x="0" y="5" width="9" height="6" rx="3"/><rect x="7" y="5" width="9" height="6" rx="3"/></g></svg><span>Revit Links</span></li>
    </ul>
  </aside>
</main>

<footer class="status">
  <span class="msg">Click to select, TAB for alternates, CTRL adds, SHIFT unselects.</span>
  <button class="s16" aria-label="Worksharing"><svg viewBox="0 0 16 16"><path d="M1 3l4-2 3 2v8l-3 2-4-2z" fill="#2f9ea8"/><path d="M7 3l4-2 3 2v4l-3 2-4-2z" fill="#4d8fd6"/><path d="M5 6l3-1 3 2v3l-3 2-3-2z" fill="#f5a623"/><path d="M9 8l6-3v6l-6 4z" fill="#2c6fb0"/><path d="M4 10l4 2v3l-4-2z" fill="#45a35a"/></svg></button>
  <div class="mid-s">
    <svg class="cv"><use href="#chev"/></svg>
    <span class="req"><svg viewBox="0 0 16 16"><path d="M7.500 1.500h8v5h-3l-2 2v-2h-3zM1 14.500h9M2.500 12a3 3 0 015.500 0zM3.500 8h3v2h-3z" fill="none" stroke="#888" stroke-width="1.300"/></svg>:0</span>
    <button class="s16" aria-label="Design options"><svg viewBox="0 0 16 16"><path d="M.5 1.500h15v13H.5z" fill="#fff" stroke="#444"/><path d="M0 0h16v3.500H0z" fill="#555"/><path d="M2 6h2M6 6h8M2 9h2M6 9h8M2 12h2M6 12h8" stroke="#444" stroke-width="1.500"/></svg></button>
    <button class="s16 opt" aria-label="Pick option"><svg viewBox="0 0 16 16"><path d="M2.500.5h13v10h-13z" fill="#eee" stroke="#999"/><path d="M2 0h14v3H2z" fill="#999"/><path d="M4 5h2M8 5h6M4 8h2M8 8h6M1 13h6M5 11l3 2-3 2" stroke="#999" fill="none" stroke-width="1.500"/></svg></button>
    <label class="pick model"><select aria-label="Active design option" disabled><option>Main Model</option></select><svg class="cv"><use href="#chev"/></svg></label>
  </div>
  <div class="right-s">
    <button class="s16" aria-label="Select links"><svg viewBox="0 0 16 16"><path d="M7 5c-1 1-5 1-5-1s4-2 5-1M8 5c1 1 6 1 6-1s-5-2-6-1" fill="none" stroke="#e87d3c" stroke-width="1.500"/><use href="#cursor" x="6" y="5" width="8" height="11"/></svg></button>
    <button class="s16" aria-label="Select underlay"><svg viewBox="0 0 16 16"><path d="M1 7l5-4h5L8 7zM1 11l4-4h5l-3 4z" fill="#3f8fd0"/><path d="M10 1l5 5M15 1l-5 5" stroke="#e22" stroke-width="2"/><use href="#cursor" x="6" y="5" width="8" height="11"/></svg></button>
    <button class="s16" aria-label="Select pinned"><svg viewBox="0 0 16 16"><path d="M3 1h8M4.500 1v5L2 9h9L9 6V1M6 9v5" fill="#eee" stroke="#444"/><use href="#cursor" x="7" y="5" width="8" height="11"/></svg></button>
    <button class="s16" aria-label="Select by face"><svg viewBox="0 0 16 16"><path d="M1 4l4-3h4v11l-4 3H1z" fill="#3f8fd0"/><path d="M10 1l5 5M15 1l-5 5" stroke="#e22" stroke-width="2"/><use href="#cursor" x="6" y="5" width="8" height="11"/></svg></button>
    <button class="s16" aria-label="Drag on selection"><svg viewBox="0 0 16 16"><path d="M6.500 1v11M1 6.500h11M5 3l1.500-2L8 3M3 5L1 6.500 3 8M10 5l2 1.500L10 8" fill="none" stroke="#222" stroke-width="1.200"/><use href="#cursor" x="7" y="5" width="8" height="11"/></svg></button>
    <button class="s16" aria-label="Background processes"><svg viewBox="0 0 16 16"><circle cx="8" cy="8" r="6" fill="none" stroke="#bbb" stroke-width="3" stroke-dasharray="3 2"/></svg></button>
    <button class="s16 flt" aria-label="Filter"><svg viewBox="0 0 16 16"><path d="M1 1.500h14L10 8v7H6.500V8z" fill="#ddd" stroke="#444"/></svg>:1</button>
  </div>
</footer>
</body>
</html>
```
FILE: styles.css
```css
:root {
  --ui: "Open Sans", "Noto Sans", sans-serif;
  --ink: #3c3c3c;
  --line: #c0c0c0;
  --panel: #f5f5f5;
  --green: #86b340;
  --pale: #e8efe3;
  --cyan: #00f3ff;
}
* { box-sizing: border-box; }
body {
  margin: 0;
  min-height: 100vh;
  display: flex;
  flex-direction: column;
  font: 12px/18px var(--ui);
  color: var(--ink);
  background: var(--panel);
}
button, select, input { font: inherit; color: inherit; border: 0; padding: 0; margin: 0; background: none; }
svg { display: block; flex: none; width: 16px; height: 16px; }
h1, h2 { margin: 0; font: inherit; }
ul { list-style: none; margin: 0; padding: 0; }
.defs { position: absolute; width: 0; height: 0; }
.dd { width: 6px; height: 4px; color: #333; }
.cv { width: 8px; height: 6px; color: #888; }
.flip { transform: rotate(180deg); }
.ltr { transform: rotate(90deg); }
.rtl { transform: rotate(-90deg); }

/* title bar */
.titlebar { display: grid; grid-template-columns: auto 1fr auto auto; align-items: center; height: 29px; background: #d9d9d9; padding-bottom: 4px; }
.qat, .account, .win { display: flex; align-items: center; }
.q { width: 24px; display: flex; justify-content: center; }
.narrow { width: 20px; }
.qat .dd { margin: 0 3px; }
.app { width: 24px; height: 22px; background: #1464f0; color: #fff; font-weight: 700; font-size: 13px; box-shadow: inset -2px -3px #0a3fa0; }
.lead { margin-left: 5px; }
.dim { opacity: .6; }
.sep { width: 1px; height: 22px; background: #aaa; margin: 0 3px; }
.doc { white-space: nowrap; line-height: 16px; text-align: center; align-self: start; padding-top: 2px; }
.account { gap: 8px; }
.w4 { width: 4px; height: 6px; }
.user { display: flex; align-items: center; gap: 4px; }
.user + .dd { margin-left: -4px; }
.account .sep { margin: 0 1px 0 0; }
.help { width: 16px; height: 16px; border: 1px solid #234; border-radius: 50%; background: #fff; color: #2340a0; font-weight: 700; line-height: 13px; }
.win { gap: 14px; padding: 0 6px 0 62px; }
.win svg { width: 12px; height: 12px; }

/* tabs */
.tabs { display: flex; align-items: stretch; height: 20px; background: #d9d9d9; white-space: nowrap; }
.tabs button { padding: 0 8px 0 9px; line-height: 18px; }
.tabs .file { width: 45px; padding: 0; background: #2a7ab5; color: #fff; margin-right: 3px; }
.tabs .active { background: var(--green); box-shadow: 0 0 0 1px #f2f2f2; padding: 0 4px; margin-left: 4px; }
.tabs .toggle { margin-left: 12px; }
.toggle svg { width: 24px; height: 10px; }

/* ribbon */
.ribbon { display: flex; height: 96px; padding-left: 1px; background: linear-gradient(var(--green) 2px, var(--pale) 2px); border-bottom: 1px solid #d5d8d2; }
.panel { display: flex; flex-direction: column; padding-top: 2px; background: var(--panel); border-right: 1px solid var(--pale); border-left: 1px solid var(--pale); flex: none; }
.body { flex: 1; display: flex; justify-content: center; padding-top: 1px; }
.body.col { flex-direction: column; align-items: center; gap: 2px; justify-content: flex-start; }
.panel h2 { height: 20px; text-align: center; display: flex; justify-content: center; align-items: center; gap: 8px; }
.panel h2 .dd { width: 8px; height: 5px; }
.ctx { margin-top: 2px; padding-top: 0; }
.ctx h2 { background: #e7ede1; }
.p-select { width: 56px; }
.p-props { width: 64px; }
.p-clip { width: 80px; }
.p-geo { width: 144px; }
.p-ctl { width: 57px; }
.p-mod { width: 237px; }
.p-view { width: 65px; }
.p-meas { width: 56px; }
.p-create { width: 82px; margin-right: 3px; }
.p-mode { width: 61px; }
.p-open { width: 57px; }
.p-coord { width: 81px; }
.big { display: flex; flex-direction: column; align-items: center; line-height: 15px; padding: 2px 0 0; height: 72px; }
.big svg { width: 32px; height: 32px; margin-bottom: 4px; }
.big span { text-align: center; }
.big .dd { width: 6px; height: 4px; margin: 2px 0 0; }
.on { background: #dceef7; box-shadow: inset 0 0 0 1px #7bc0e4; }
.big.on { width: 44px; }
.mid { width: 38px; height: 34px; display: flex; justify-content: center; align-items: center; }
.mid svg { width: 32px; height: 32px; }
.off { color: #aaa; }
.trio { display: grid; grid-template-rows: repeat(3, 24px); align-items: center; }
.sm { width: 24px; display: flex; justify-content: center; }
.p-clip .body { gap: 8px; padding-left: 5px; }
.row { display: flex; align-items: center; gap: 5px; }
.row .dd { margin-left: 4px; }
.p-geo .body { justify-content: flex-start; padding-left: 6px; }
.trio.left { width: 73px; }
.p-geo .body > .dd { align-self: flex-start; margin: 34px 0 0 3px; }
.grid4 { display: grid; grid-template: repeat(2, 36px) / repeat(4, 39px); }
.grid3 { display: grid; grid-template: repeat(3, 24px) / repeat(3, 25px); align-items: center; }
.lg { display: flex; justify-content: center; align-items: center; }
.lg svg { width: 32px; height: 32px; }
.grid2 { display: grid; grid-template: repeat(2, 36px) / 40px 10px; align-items: center; }
.grid22 { display: grid; grid-template: repeat(2, 36px) / repeat(2, 39px); }

.options { display: flex; height: 26px; background: var(--pale); align-items: stretch; }
.options span { width: 175px; padding: 5px 8px 3px; border-right: 1px solid #888; }

/* work area */
.work { flex: 1; display: grid; grid-template-columns: 219px minmax(0, 1fr) 401px; border-top: 2px solid var(--line); }
.dockhead { display: flex; justify-content: space-between; align-items: center; height: 17px; background: #d9d9d9; padding: 0 3px 0 2px; }
.dockhead svg { width: 10px; height: 10px; color: #666; }
.props { display: flex; flex-direction: column; background: #eee; }
.typesel { display: flex; justify-content: space-between; align-items: center; height: 70px; margin: 0 3px 0 1px; border: 1px solid #b8b8b8; background: var(--panel); padding: 0 6px 0 2px; }
.typesel .dd { width: 8px; color: #777; }
.thumb { width: 66px; height: 66px; border: 1px solid #aaa; background: #fff; }
.logo { font: 800 34px "Open Sans", sans-serif; fill: #fff; }
.filter { display: flex; justify-content: space-between; height: 32px; padding: 0 2px 0 1px; background: var(--panel); }
.pick { display: flex; align-items: center; justify-content: space-between; }
.pick select { appearance: none; min-width: 0; opacity: 1; }
.filter .pick { width: 135px; height: 28px; border-bottom: 2px solid #ccc; padding: 2px 4px 0; }
.edit { display: flex; align-items: center; gap: 4px; width: 81px; height: 30px; padding-left: 5px; color: #aaa; background: #eee; }
.scroll { flex: 1; background: #fff; margin: 0 2px 0 1px; }
.ptable { border-collapse: separate; border-spacing: 0; table-layout: fixed; width: 100%; }
.c1 { width: 101px; }
.c3 { width: 13px; }
.ptable th, .ptable td { padding: 0; font-weight: 400; text-align: left; vertical-align: top; line-height: 17px; height: 18px; border-bottom: 1px dotted #ddd; white-space: nowrap; }
.ptable th { padding-left: 8px; }
.ptable td { padding-left: 2px; border-left: 1px dotted #ddd; }
.ptable td:last-child { padding: 1px 0 0 1px; }
.ptable .g th { padding-left: 2px; line-height: 18px; }
.ptable .g td:last-child { padding-top: 4px; }
.ptable .g th, .ptable .g td { background: #f1f1f1; border: 0; }
.ptable .off { color: #999; }
.ptable svg { width: 8px; height: 10px; }
.ptable td button { display: block; width: 9px; height: 15px; border: 1px solid #b5b5b5; background: #f2f2f2; }
.role { padding-right: 4px; height: 17px; }
.role select { background: #0a78d7; color: #fff; line-height: 15px; }
.ptable .role svg { width: 8px; height: 6px; }
.ptable input { display: block; width: 11px; height: 11px; margin: 4px 2px 2px; appearance: none; border: 1px solid #ccc; background: #fff; }
.props footer { display: flex; justify-content: space-between; height: 26px; padding: 0 5px 0 2px; }
.props a { color: #0066b4; }
.props footer button { width: 70px; height: 19px; margin-top: 3px; border: 1px solid #ccc; border-radius: 2px; color: #999; line-height: 17px; background: #f0f0f0; }

.viewer { display: flex; flex-direction: column; border-left: 2px solid var(--line); border-right: 2px solid var(--line); background: #fff; min-width: 0; }
.vtabs { display: flex; justify-content: space-between; height: 20px; background: #cbcbcb; margin-bottom: 2px; }
.vtab { display: flex; align-items: center; gap: 8px; width: 128px; background: #fff; padding: 2px 5px 0; }
.vtab button { margin-left: auto; }
.vtab button svg { width: 10px; height: 10px; color: #777; }
.vmenu { padding-right: 6px; }
.vmenu svg { width: 8px; height: 8px; }
.vrow { flex: 1; display: flex; margin-left: 2px; min-height: 400px; }
.canvas { position: relative; flex: 1; min-width: 0; border: 4px solid var(--cyan); display: flex; contain: size; }
.scene { width: 100%; height: 100%; }
.isolate { position: absolute; left: 0; top: 0; height: 20px; padding: 0 4px 0 1px; background: var(--cyan); color: #000; font: bold 15px/16px "Liberation Sans", Arial, sans-serif; }
.cube { position: absolute; right: 19px; top: 54px; width: 136px; height: 92px; }
.face { font-family: "Open Sans", sans-serif; font-weight: 700; fill: #8d8d92; }
.front { font-size: 10px; }
.side { font-size: 7px; }
.navbar { position: absolute; right: 0; top: 167px; width: 32px; height: 118px; border: 2px solid #bbb; border-right: 0; border-radius: 6px 0 0 6px; background: var(--panel); display: flex; flex-direction: column; align-items: center; padding: 2px 0; }
.navbar hr { width: 26px; margin: 4px 0; border: 0; border-top: 1px solid #bbb; }
.navbar .dd { margin: 6px 0 0; height: 3px; color: #777; }
.nb { width: 24px; height: 24px; }
.nx { align-self: flex-end; margin-bottom: 8px; }
.nx svg { width: 8px; height: 8px; }
.end { margin: auto 0 0; }
.vs { width: 17px; background: #e8e8e8; display: flex; flex-direction: column; justify-content: space-between; align-items: center; }
.vs button { height: 17px; width: 100%; display: grid; place-items: center; background: #f1f1f1; }
.vs i { width: 5px; height: 16px; border-radius: 2px; background: #d0d0d0; }
.vbar { display: flex; align-items: center; height: 17px; margin: 0 0 2px 2px; background: var(--panel); }
.scale { width: 83px; text-align: center; line-height: 17px; }
.vicons { display: flex; gap: 10px; padding-right: 4px; }
.sel { outline: 1px solid #1f8ae0; background: #eef5fc; }
.hs { flex: 1; height: 17px; background: #e8e8e8; display: flex; justify-content: space-between; align-items: center; }
.hs button { width: 17px; height: 17px; display: grid; place-items: center; background: #f1f1f1; }
.hs i { width: 18px; height: 5px; border-radius: 2px; background: #d0d0d0; }
.grip { width: 8px; height: 8px; margin: 0 3px 0 5px; align-self: flex-end; }

/* project browser */
.browser { background: #fff; border-left: 2px solid #eee; border-bottom: 2px solid #eee; }
.browser .dockhead { margin-left: -2px; padding-left: 4px; padding-right: 1px; }
.search { display: flex; align-items: center; gap: 10px; height: 25px; margin: 9px 8px 8px 9px; padding: 0 8px; border: 1px solid #ddd; }
.search input { flex: 1; outline: 0; }
.search input::placeholder { color: #aaa; opacity: 1; }
.tree { color: #555; }
.tree span, .tree strong { line-height: 20px; }
.root, .top { display: flex; align-items: center; height: 20px; gap: 5px; padding-left: 5px; }
.root { background: #f1f1f1; border: 1px solid #ddd; padding-left: 4px; }
.tg { width: 8px; height: 8px; margin-right: 4px; background: linear-gradient(#777, #777) center / 8px 2px no-repeat; }
.plus { background: linear-gradient(#777, #777) center / 8px 2px no-repeat, linear-gradient(#777, #777) center / 2px 8px no-repeat; }
.none { background: none; }
.n { display: flex; align-items: center; height: 20px; gap: 4px; }
.n::before { content: ""; width: 8px; border-top: 1px dashed #bbb; }
.l2 { margin-left: 9px; }
.l2 > li { border-left: 1px dashed #bbb; }
.l2 > li:last-child { border-left-color: transparent; background: linear-gradient(#bbb, #bbb) left top / 1px 10px no-repeat; background-origin: border-box; }
.l3 { margin-left: 15px; }
.l3 li { display: flex; align-items: center; gap: 4px; height: 20px; border-left: 1px dashed #bbb; }
.l3 li::before { content: ""; width: 25px; border-top: 1px dashed #bbb; }
.l3 li:last-child { border-left-color: transparent; background: linear-gradient(#bbb, #bbb) left top / 1px 10px no-repeat; background-origin: border-box; }

/* status bar */
.status { display: grid; grid-template-columns: 895px 208px 1fr auto; align-items: center; height: 24px; background: #f4f4f4; }
.msg { padding-left: 1px; }
.mid-s { display: flex; align-items: center; gap: 10px; padding-left: 10px; color: #999; }
.mid-s .cv { color: #bbb; }
.req { display: flex; align-items: center; gap: 1px; width: 42px; margin-left: 2px; }
.opt { margin-right: 2px; }
.model { width: 199px; }
.right-s { display: flex; align-items: center; gap: 10px; padding-right: 72px; }
.s16 { display: block; }
.flt { display: flex; align-items: center; }
```
